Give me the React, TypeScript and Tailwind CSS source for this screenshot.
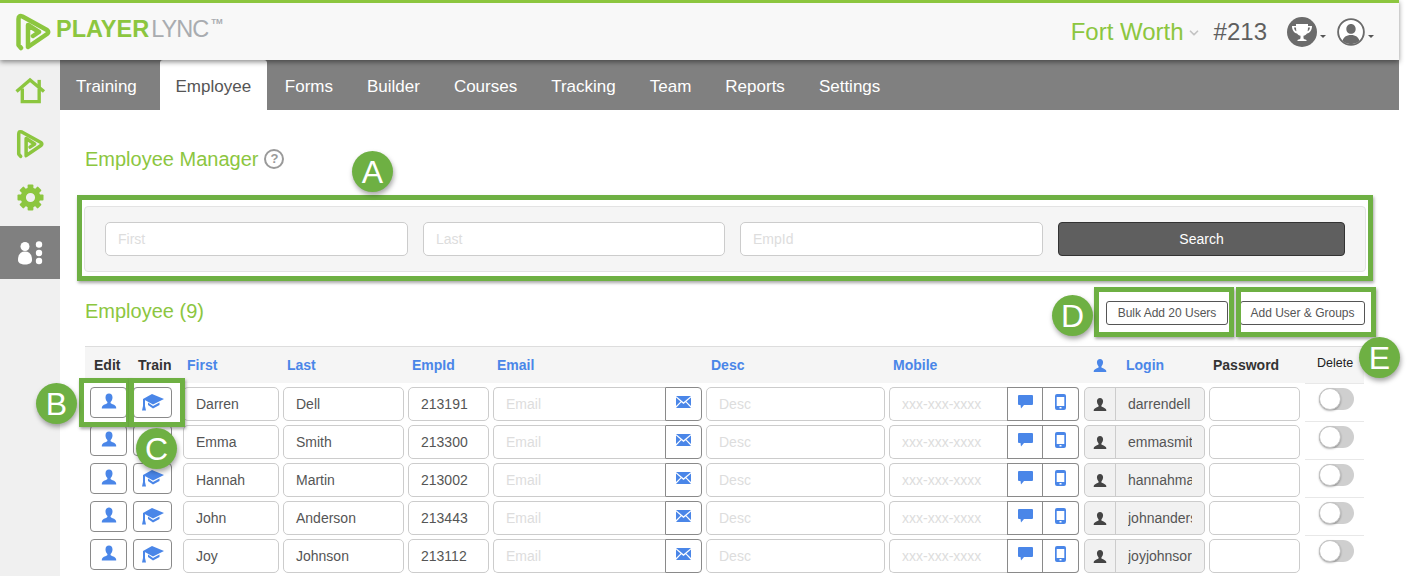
import { ChevronDown } from 'lucide-react'

const employees = [
  { first: 'Darren', last: 'Dell', id: '213191', login: 'darrendell' },
  { first: 'Emma', last: 'Smith', id: '213300', login: 'emmasmit' },
  { first: 'Hannah', last: 'Martin', id: '213002', login: 'hannahma' },
  { first: 'John', last: 'Anderson', id: '213443', login: 'johnanders' },
  { first: 'Joy', last: 'Johnson', id: '213112', login: 'joyjohnsor' },
]

const tabs = ['Training', 'Employee', 'Forms', 'Builder', 'Courses', 'Tracking', 'Team', 'Reports', 'Settings']

const inputCls = 'h-[34px] rounded-[5px] border border-[#cccccc] bg-white px-3 text-[14px] text-[#555555] flex items-center overflow-hidden whitespace-nowrap'
const placeholderCls = 'text-[#dddddd]'

function PlayMark({ className }: { className?: string }) {
  return (
    <svg viewBox="0 0 36 38" className={className} fill="none" stroke="#8cc63f" strokeWidth="4.500" strokeLinejoin="round" strokeLinecap="round">
      <path d="M6 35 L3.500 32 V6 Q3.500 2 7.500 3.500 L32 17 Q34.500 19 32 21 L13 34 V12 L24 19 L18 23" />
    </svg>
  )
}

function PersonIcon({ className, fill = '#4a86e8' }: { className?: string; fill?: string }) {
  return (
    <svg viewBox="0 0 16 16" className={className}>
      <path fill={fill} d="M8 0.500c2.200 0 3.500 1.700 3.500 3.900 0 1.700-.8 3.400-1.700 4.400-.4.500-.3 1.400.3 1.700 1.900.9 4.400 1.600 4.900 3.200.2.600.2 1.300.2 1.800H.8c0-.5 0-1.200.2-1.800.5-1.600 3-2.300 4.900-3.200.6-.3.700-1.200.3-1.700-.9-1-1.700-2.700-1.700-4.400C4.500 2.200 5.800.5 8 .5z" />
    </svg>
  )
}

function CapIcon() {
  return (
    <svg viewBox="0 0 22 18" className="w-[22px] h-[18px]">
      <path fill="#4a86e8" d="M1 6 L10 1 L22 6 L11 11.500 Z" />
      <path fill="#4a86e8" d="M6 9.500 L11 13 L17.500 9.500 V12 L11 15.500 L6 12 Z" />
      <path fill="#4a86e8" d="M1 6h2v7l1 4.500H0l1-4.500z" />
    </svg>
  )
}

function MailIcon() {
  return (
    <svg viewBox="0 0 15 12" className="w-[15px] h-[12px]">
      <path fill="#4a86e8" d="M0 0h15L7.500 6.200z" />
      <path fill="#4a86e8" d="M0 1.500 4.600 5.400 0 10zM15 1.500l-4.600 3.900L15 10zM0 12l5.300-5.700 2.200 1.800 2.200-1.800L15 12z" />
    </svg>
  )
}

function ChatIcon() {
  return (
    <svg viewBox="0 0 15 14" className="w-[15px] h-[14px]">
      <path fill="#4a86e8" d="M1 0h13a1 1 0 0 1 1 1v8a1 1 0 0 1-1 1H6l-3 3.500-.5-3.500H1a1 1 0 0 1-1-1V1a1 1 0 0 1 1-1z" />
    </svg>
  )
}

function PhoneIcon() {
  return (
    <svg viewBox="0 0 11 16" className="w-[11px] h-[16px]">
      <path fill="#4a86e8" fillRule="evenodd" d="M2 0h7a2 2 0 0 1 2 2v12a2 2 0 0 1-2 2H2a2 2 0 0 1-2-2V2a2 2 0 0 1 2-2zm-.3 3v9h7.600V3zM4.500 13v1.500h2V13z" />
    </svg>
  )
}

function TrophyIcon() {
  return (
    <svg viewBox="0 0 30 30" className="w-[30px] h-[30px]">
      <circle cx="15" cy="15" r="15" fill="#6b6b6b" />
      <path fill="#ffffff" d="M9 7h12v2h4c0 4-2 7-5 7.500-.8 1.200-2 2-3.500 2.300V21c0 1 1.500 1.500 3 2v1H10.500v-1c1.500-.5 3-1 3-2v-2.200c-1.500-.3-2.700-1.100-3.500-2.300C7 16 5 13 5 9h4zM7 10.500c.2 1.800 1.200 3.300 2.400 3.800-.2-1-.4-2.400-.4-3.800zm16 0h-2c0 1.400-.2 2.800-.4 3.800 1.200-.5 2.200-2 2.400-3.800z" />
    </svg>
  )
}

function UserCircleIcon() {
  return (
    <svg viewBox="0 0 30 30" className="w-[28px] h-[28px]">
      <circle cx="15" cy="15" r="13.800" fill="#ffffff" stroke="#6b6b6b" strokeWidth="2" />
      <path fill="#6b6b6b" d="M15 6.500c3 0 5 2.300 5 5.200 0 3-2 5.300-5 5.300s-5-2.300-5-5.300c0-2.900 2-5.200 5-5.200zM6 24.500c.8-4 4-6.300 9-6.300s8.200 2.300 9 6.300c-2.300 2.200-5.500 3.500-9 3.500s-6.700-1.300-9-3.500z" />
    </svg>
  )
}

function HomeIcon() {
  return (
    <svg viewBox="0 0 32 28" className="w-[31px] h-[27px]" fill="none" stroke="#8cc63f" strokeWidth="3.500">
      <path d="M1.500 15 15.500 3 30 15" />
      <path d="M7.500 12v13.500H25V12" />
      <path d="M25 3v8" />
    </svg>
  )
}

function GearIcon() {
  const teeth = [0, 45, 90, 135, 180, 225, 270, 315]
  return (
    <svg viewBox="0 0 28 28" className="w-[27px] h-[27px]">
      {teeth.map((deg) => (
        <rect key={deg} x="11" y="0.500" width="6" height="6" rx="1" fill="#8cc63f" transform={`rotate(${deg} 14 14)`} />
      ))}
      <circle cx="14" cy="14" r="7.500" fill="none" stroke="#8cc63f" strokeWidth="5.500" />
    </svg>
  )
}

function GroupIcon() {
  return (
    <svg viewBox="0 0 28 24" className="w-[28px] h-[24px]">
      <circle cx="9" cy="5.500" r="4.500" fill="#ffffff" />
      <path fill="#ffffff" d="M2 19c0-5 2-8.500 7-8.500s7 3.500 7 8.500c0 3-3 4.500-7 4.500s-7-1.500-7-4.500z" />
      <circle cx="23" cy="3.500" r="3.200" fill="#ffffff" />
      <circle cx="23" cy="12" r="3.200" fill="#ffffff" />
      <circle cx="23" cy="20" r="3.200" fill="#ffffff" />
    </svg>
  )
}

function Toggle() {
  return (
    <div className="w-[35px] h-[22px] rounded-full bg-[#cfcfcf]">
      <div className="w-[22px] h-[22px] rounded-full bg-white border border-[#c4c4c4] shadow-[0_1px_2px_rgba(0,0,0,0.3)]" />
    </div>
  )
}

function Marker({ label, className }: { label: string; className: string }) {
  return (
    <div className={`absolute w-[41px] h-[41px] rounded-full bg-[#6eb043] text-white text-[32px] leading-none flex items-center justify-center shadow-[1px_3px_5px_rgba(0,0,0,0.35)] ${className}`}>
      {label}
    </div>
  )
}

function Callout({ className }: { className: string }) {
  return <div className={`absolute border-[5px] border-[#6eb043] shadow-[1px_2px_3px_rgba(0,0,0,0.35)] ${className}`} />
}

const iconBtn = 'h-[31px] rounded-[4px] border border-[#8a8a8a] bg-white flex items-center justify-center'
const gridCols = 'grid grid-cols-[44px_50px_100px_125px_85px_213px_183px_194px_126px_95px_64px]'

function EmployeeRow({ first, last, id, login }: { first: string; last: string; id: string; login: string }) {
  return (
    <div className={`${gridCols} h-[38px] items-start pt-[4px]`}>
      <div className={`${iconBtn} ml-[5px] w-[37px]`}>
        <PersonIcon className="w-[16px] h-[16px] mb-[3px]" />
      </div>
      <div className={`${iconBtn} ml-[4px] w-[39px]`}>
        <div className="mb-[2px]"><CapIcon /></div>
      </div>
      <div className={`${inputCls} ml-[4px]`}>{first}</div>
      <div className={`${inputCls} ml-[4px]`}>{last}</div>
      <div className={`${inputCls} ml-[4px]`}>{id}</div>
      <div className="ml-[4px] flex h-[34px]">
        <div className={`${inputCls} flex-1 rounded-r-none border-r-0`}>
          <span className={placeholderCls}>Email</span>
        </div>
        <div className="w-[37px] border border-[#8a8a8a] rounded-r-[4px] flex items-center justify-center">
          <div className="mb-[5px]"><MailIcon /></div>
        </div>
      </div>
      <div className={`${inputCls} ml-[4px]`}>
        <span className={placeholderCls}>Desc</span>
      </div>
      <div className="ml-[4px] flex h-[34px]">
        <div className={`${inputCls} flex-1 rounded-r-none border-r-0`}>
          <span className={placeholderCls}>xxx-xxx-xxxx</span>
        </div>
        <div className="w-[36px] border border-[#8a8a8a] flex items-center justify-center">
          <div className="mb-[5px]"><ChatIcon /></div>
        </div>
        <div className="w-[36px] border border-l-0 border-[#8a8a8a] rounded-r-[4px] flex items-center justify-center">
          <div className="mb-[5px]"><PhoneIcon /></div>
        </div>
      </div>
      <div className="ml-[5px] flex h-[34px] rounded-[5px] border border-[#cccccc] bg-[#f1f1f1] text-[14px] text-[#555555]">
        <div className="w-[31px] shrink-0 border-r border-[#cccccc] flex items-center justify-center">
          <PersonIcon className="w-[14px] h-[15px]" fill="#444444" />
        </div>
        <div className="mx-[12px] flex-1 min-w-0 flex items-center whitespace-nowrap overflow-hidden">{login}</div>
      </div>
      <div className={`${inputCls} ml-[4px]`} />
      <div className="ml-[5px] -mt-[4px] h-[38px] border-t border-[#e8e8e8] pt-[4px] pl-[14px]">
        <Toggle />
      </div>
    </div>
  )
}

export default function App() {
  return (
    <div className="relative w-[1417px] h-[576px] overflow-hidden bg-white font-['Liberation_Sans',Arial,sans-serif]">
      <div className="w-[1399px] h-full flex flex-col">
        <header className="relative z-10 h-[60px] shrink-0 border-t-[3px] border-[#8cc63f] bg-[#f8f8f8] shadow-[0_2px_5px_rgba(0,0,0,0.45)] flex items-center pl-[15px]">
          <PlayMark className="w-[36px] h-[38px]" />
          <div className="ml-[5px] mb-[4px] flex items-start text-[23.5px] leading-none font-bold text-[#8cc63f]">
            PLAYER
            <span className="ml-[2px] font-normal tracking-[-1px] text-[#a9acb0]">LYNC</span>
            <span className="ml-[3px] text-[8px] font-bold text-[#a9acb0]">TM</span>
          </div>
          <div className="ml-auto flex items-center pr-[25px]">
            <span className="text-[24px] text-[#8cc63f]">Fort Worth</span>
            <ChevronDown className="w-[14px] h-[14px] ml-[3px] mt-[2px] text-[#c4c4c4]" strokeWidth={3} />
            <span className="ml-[13px] text-[24px] text-[#5f5f5f]">#213</span>
            <div className="ml-[20px]"><TrophyIcon /></div>
            <div className="ml-[3px] mt-[10px] border-x-[3.500px] border-t-[3.500px] border-x-transparent border-t-[#555555]" />
            <div className="ml-[11px]"><UserCircleIcon /></div>
            <div className="ml-[3px] mt-[10px] border-x-[3.500px] border-t-[3.500px] border-x-transparent border-t-[#555555]" />
          </div>
        </header>

        <div className="flex flex-1 min-h-0">
          <aside className="w-[60px] shrink-0 bg-[#f0f0f0] flex flex-col">
            <div className="h-[55px] flex items-center justify-center pt-[5px]"><HomeIcon /></div>
            <div className="h-[54px] flex items-center justify-center pt-[4px]"><PlayMark className="w-[28px] h-[30px]" /></div>
            <div className="h-[57px] flex items-center justify-center"><GearIcon /></div>
            <div className="h-[53px] bg-[#808080] flex items-center justify-center"><GroupIcon /></div>
          </aside>

          <main className="flex-1 min-w-0">
            <nav className="h-[50px] bg-[#808080] flex items-end text-[17px] text-white">
              {tabs.map((tab, i) =>
                tab === 'Employee' ? (
                  <div key={tab} className="h-[50px] w-[107px] ml-[6px] mr-[1px] pt-[3px] bg-white rounded-t-[3px] text-[#555555] flex items-center justify-center">
                    {tab}
                  </div>
                ) : (
                  <div key={tab} className={`h-[50px] px-[17px] pt-[3px] flex items-center ${i === 0 ? '-ml-px' : ''}`}>{tab}</div>
                ),
              )}
            </nav>

            <div className="pl-[25px]">
              <h1 className="mt-[37px] h-[24px] flex items-center text-[20px] font-normal text-[#8cc63f]">
                Employee Manager
                <span className="ml-[6px] w-[20px] h-[20px] rounded-full border-2 border-[#9a9a9a] text-[#9a9a9a] text-[13px] font-bold flex items-center justify-center">?</span>
              </h1>

              <div className="mt-[35px] -ml-px w-[1282px] h-[66px] rounded-[4px] border border-[#e3e3e3] bg-[#f5f5f5] flex items-center pl-[20px] gap-[15px]">
                <div className={`${inputCls} w-[303px]`}><span className={placeholderCls}>First</span></div>
                <div className={`${inputCls} w-[302px]`}><span className={placeholderCls}>Last</span></div>
                <div className={`${inputCls} w-[303px]`}><span className={placeholderCls}>EmpId</span></div>
                <button className="w-[287px] h-[34px] rounded-[4px] border border-[#333333] bg-[#5f5f5f] text-[14px] text-white">Search</button>
              </div>

              <div className="mt-[27px] flex items-start justify-between w-[1280px] h-[24px]">
                <h2 className="h-[24px] flex items-center text-[20px] font-normal text-[#8cc63f]">Employee (9)</h2>
                <div className="flex gap-[12px] mt-[2px]">
                  <button className="w-[122px] h-[24px] rounded-[3px] border border-[#555555] bg-white text-[12px] text-[#555555]">Bulk Add 20 Users</button>
                  <button className="w-[125px] h-[24px] rounded-[3px] border border-[#555555] bg-white text-[12px] text-[#555555]">Add User &amp; Groups</button>
                </div>
              </div>

              <div className="mt-[23px] w-[1279px]">
                <div className={`${gridCols} h-[37px] items-center border-t border-[#dddddd] bg-[#f5f5f5] text-[14px] font-bold text-[#4a86e8]`}>
                  <span className="ml-[9px] text-[#333333]">Edit</span>
                  <span className="ml-[9px] text-[#333333]">Train</span>
                  <span className="ml-[8px]">First</span>
                  <span className="ml-[8px]">Last</span>
                  <span className="ml-[8px]">EmpId</span>
                  <span className="ml-[8px]">Email</span>
                  <span className="ml-[9px]">Desc</span>
                  <span className="ml-[8px]">Mobile</span>
                  <span className="ml-[14px] flex items-center gap-[19px]">
                    <PersonIcon className="w-[14px] h-[15px]" />
                    Login
                  </span>
                  <span className="ml-[8px] text-[#333333]">Password</span>
                  <span className="ml-[17px] -mt-[4px] text-[12.500px] font-normal text-[#222222]">Delete</span>
                </div>
                {employees.map((e) => (
                  <EmployeeRow key={e.id} {...e} />
                ))}
              </div>
            </div>
          </main>
        </div>
      </div>

      <Callout className="left-[77px] top-[195px] w-[1296px] h-[86px]" />
      <Callout className="left-[79px] top-[378px] w-[52px] h-[49px]" />
      <Callout className="left-[129px] top-[378px] w-[56px] h-[49px]" />
      <Callout className="left-[1094px] top-[287px] w-[140px] h-[50px]" />
      <Callout className="left-[1236px] top-[287px] w-[140px] h-[50px]" />
      <Marker label="A" className="left-[352px] top-[151px]" />
      <Marker label="B" className="left-[36px] top-[383px]" />
      <Marker label="C" className="left-[136px] top-[428px]" />
      <Marker label="D" className="left-[1052px] top-[295px]" />
      <Marker label="E" className="left-[1359px] top-[337px]" />
    </div>
  )
}
